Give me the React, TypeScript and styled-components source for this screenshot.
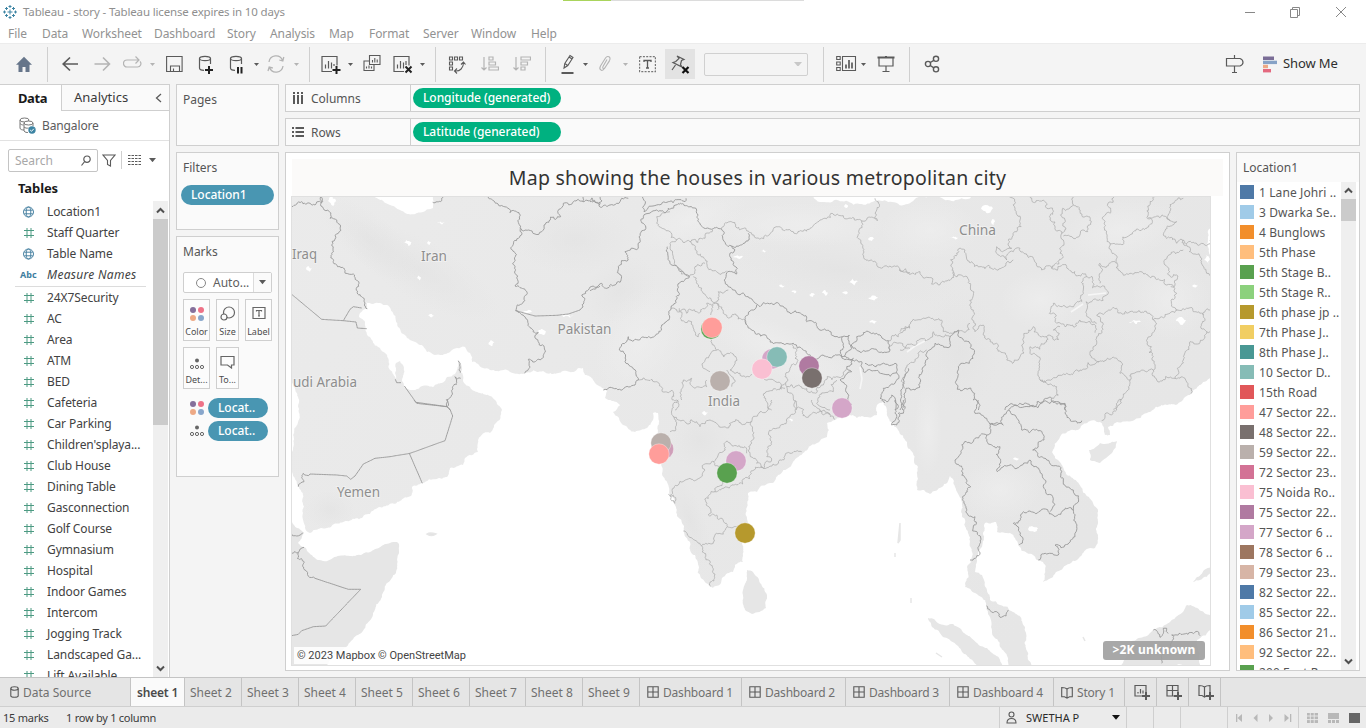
import React from "react";
import styled, { createGlobalStyle } from "styled-components";

const ui = `"Noto Sans", "Open Sans", sans-serif`;

const Global = createGlobalStyle`
  * { box-sizing: border-box; }
  html, body { margin: 0; padding: 0; }
  body { width: 1366px; height: 728px; overflow: hidden; background: #fff; font-family: ${ui}; font-size: 12px; color: #444; }
`;

/* ---------- frame ---------- */
const Window = styled.div`
  width: 1366px; height: 728px; display: flex; flex-direction: column; background: #f4f4f4; overflow: hidden;
`;
const TitleBar = styled.div`
  height: 23px; background: #fff; display: flex; align-items: center; padding-left: 3px; color: #8f8f8f; font-size: 11.5px; position: relative; flex: none;
`;
const TitleText = styled.span<{ $w: number }>`
  margin-left: 6px; width: ${p => p.$w}px; white-space: nowrap; letter-spacing: -0.15px;
`;
const TopAccent = styled.div`
  position: absolute; left: 563px; top: 0; width: 241px; height: 1px; background: linear-gradient(to right, #a9d45c 0 48px, #dcdcdc 48px);
`;
const WindowButtons = styled.div`
  margin-left: auto; margin-right: 19px; height: 20px; display: flex; gap: 34px; align-items: center;
`;
const MenuBar = styled.div`
  height: 20px; flex: none; background: #fff; color: #929292; font-size: 12px; display: flex; line-height: 21px; padding-left: 8px;
`;
const MenuItem = styled.span<{ $w: number }>`
  width: ${p => p.$w}px; white-space: nowrap; letter-spacing: -0.08px;
`;
const Toolbar = styled.div`
  height: 41px; flex: none; display: flex; align-items: center; border-top: 1px solid #ececec; background: #f4f4f4;
`;
const Tool = styled.div<{ $gap: number; $w: number; $on?: boolean }>`
  margin-left: ${p => p.$gap}px; width: ${p => p.$w}px; height: ${p => (p.$on ? 30 : 24)}px; flex: none;
  display: flex; align-items: center; justify-content: center; background: ${p => (p.$on ? "#e3e3e3" : "transparent")};
`;
const Divider = styled.div<{ $gap: number }>`
  margin-left: ${p => p.$gap}px; width: 1px; height: 35px; background: #cfcfcf; flex: none;
`;
const FitSelect = styled.div`
  margin-left: 9px; width: 104px; height: 23px; border: 1px solid #d0d0d0; border-radius: 2px; display: flex; align-items: center; justify-content: flex-end; padding-right: 5px; flex: none;
`;
const ShowMe = styled.span`
  margin-left: 6px; font-size: 13px; color: #2e2e2e; white-space: nowrap; letter-spacing: -0.1px; margin-top: -2px;
`;
const Body = styled.div`
  height: 593px; flex: none; display: flex;
`;

/* ---------- data pane ---------- */
const SidePane = styled.div`
  width: 170px; background: #fff; border-right: 1px solid #cfcfcf; border-top: 1px solid #cfcfcf; display: flex; flex-direction: column; flex: none;
`;
const PaneTabs = styled.div`
  display: flex; height: 26px; flex: none; font-size: 13px; line-height: 25px;
`;
const PaneTab = styled.div<{ $active?: boolean }>`
  width: ${p => (p.$active ? 62 : 107)}px; text-align: left; padding-left: ${p => (p.$active ? 18 : 12)}px;
  font-weight: ${p => (p.$active ? 700 : 400)}; color: ${p => (p.$active ? "#1a1a1a" : "#3a3a3a")};
  background: ${p => (p.$active ? "#fff" : "#fafafa")};
  border-right: ${p => (p.$active ? "1px solid #cfcfcf" : "0")};
  border-bottom: ${p => (p.$active ? "0" : "1px solid #cfcfcf")};
  display: flex; justify-content: space-between; align-items: center; padding-right: ${p => (p.$active ? 0 : 7)}px; white-space: nowrap; letter-spacing: ${p => (p.$active ? "-.4px" : "0")};
`;
const SourceRow = styled.div`
  height: 30px; flex: none; display: flex; align-items: center; padding-left: 19px; gap: 6px; border-bottom: 1px solid #e2e2e2; color: #5c5c5c; letter-spacing: -0.13px;
`;
const SearchRow = styled.div`
  height: 38px; flex: none; display: flex; align-items: center; padding-left: 8px;
`;
const SearchBox = styled.div`
  width: 90px; height: 23px; border: 1px solid #c4c4c4; border-radius: 2px; display: flex; align-items: center; justify-content: space-between; padding: 0 6px; color: #a8a8a8; margin-right: 4px;
`;
const ThinRule = styled.div`
  width: 1px; height: 18px; background: #cfcfcf; margin: 0 6px 0 5px;
`;
const TablesHead = styled.div`
  height: 22px; flex: none; font-weight: 700; font-size: 13px; color: #1a1a1a; padding-left: 18px; line-height: 19px; letter-spacing: -0.1px;
`;
const FieldArea = styled.div`
  flex: 1; min-height: 0; display: flex; overflow: hidden;
`;
const FieldList = styled.div`
  width: 153px; flex: none; overflow: hidden;
`;
const Field = styled.div<{ $italic?: boolean }>`
  height: 21px; display: flex; align-items: center; color: #424242; font-style: ${p => (p.$italic ? "italic" : "normal")}; letter-spacing: ${p => (p.$italic ? 0.3 : -0.1)}px; white-space: nowrap;
`;
const FieldIcon = styled.span`
  width: 47px; padding-left: 20px; display: flex; align-items: center; flex: none;
`;
const Abc = styled.span`
  font: 700 9px ${ui}; color: #3e7ea0; letter-spacing: 0;
`;
const FieldRule = styled.div`
  height: 1px; margin: 1px 7px 0 15px; background: #dcdcdc;
`;
const ScrollTrack = styled.div<{ $w: number }>`
  width: ${p => p.$w}px; background: #efefef; display: flex; flex-direction: column; align-items: center; flex: none;
`;
const ScrollArrow = styled.div<{ $h: number }>`
  height: ${p => p.$h}px; display: flex; align-items: center; justify-content: center; flex: none;
`;
const ScrollThumb = styled.div<{ $h: number }>`
  height: ${p => p.$h}px; width: 100%; background: #cbcbcb; flex: none;
`;
const Grow = styled.div`flex: 1;`;

/* ---------- cards ---------- */
const CardColumn = styled.div`
  width: 103px; margin-left: 6px; display: flex; flex-direction: column; gap: 6px; flex: none;
`;
const Card = styled.div<{ $h: number }>`
  height: ${p => p.$h}px; border: 1px solid #cfcfcf; background: #fafafa; display: flex; flex-direction: column; flex: none;
`;
const CardTitle = styled.div`
  padding: 6px 0 0 6px; line-height: 18px; color: #555; letter-spacing: 0;
`;
const Pill = styled.div<{ $w: number; $color: string; $ml?: number; $mt?: number }>`
  width: ${p => p.$w}px; height: 20px; margin: ${p => p.$mt ?? 0}px 0 0 ${p => p.$ml ?? 0}px; border-radius: 10px; background: ${p => p.$color}; color: #fff; font-weight: 500; padding-left: 10px; line-height: 19px; white-space: nowrap; letter-spacing: -0.05px; font-size: 12px; flex: none;
`;
const MarkType = styled.div`
  margin: 11px 0 0 6px; width: 89px; height: 21px; border: 1px solid #cfcfcf; border-radius: 2px; background: #fff; display: flex; align-items: center; color: #606060; padding-left: 11px; white-space: nowrap; flex: none;
`;
const MarkTypeText = styled.span`margin-left: 6px; width: 40px;`;
const MarkArrow = styled.span`
  border-left: 1px solid #dcdcdc; height: 19px; width: 18px; display: flex; align-items: center; justify-content: center; background: #fafafa;
`;
const ButtonRow = styled.div`
  display: flex; margin: 6px 0 0 6px; gap: 6px; flex: none;
`;
const MarkButton = styled.div<{ $w: number }>`
  width: ${p => p.$w}px; height: 42px; border: 1px solid #cfcfcf; background: #fcfcfc; display: flex; flex-direction: column; align-items: center; justify-content: space-between; padding: 6px 0 1px; font-size: 9px; line-height: 14px; color: #4c4c4c; white-space: nowrap;
`;
const EncodingRow = styled.div`
  display: flex; align-items: center; height: 20px; margin: 0 0 3px 12px; gap: 3px; flex: none;
`;
const EncodingGap = styled.div`height: 9px; flex: none;`;

/* ---------- shelves and sheet ---------- */
const Main = styled.div`
  margin-left: 6px; width: 1075px; display: flex; flex-direction: column; gap: 6px; flex: none;
`;
const Shelf = styled.div`
  height: 28px; border: 1px solid #cfcfcf; background: #fafafa; display: flex; align-items: center; color: #555; flex: none;
`;
const ShelfName = styled.div`
  width: 125px; height: 26px; display: flex; align-items: center; gap: 7px; padding-left: 6px; border-right: 1px solid #cfcfcf; margin-right: 2px;
`;
const SheetRow = styled.div`
  display: flex; gap: 6px; height: 519px;
`;
const Sheet = styled.div`
  width: 945px; border: 1px solid #cfcfcf; background: #fff; padding: 6px 5px 0; display: flex; flex-direction: column;
`;
const SheetTitle = styled.div`
  height: 37px; margin: 0 1px; background: #fbfaf9; text-align: center; font-size: 19.5px; line-height: 38px; color: #333; white-space: nowrap; letter-spacing: 0.26px;
`;
const MapFrame = styled.div`
  position: relative; width: 920px; height: 470px; border: 1px solid #e0e0e0; background: #fff; overflow: hidden;
`;
const Credit = styled.div`
  position: absolute; left: 2px; bottom: 1px; height: 17px; background: rgba(255,255,255,.85); padding: 0 3px; font: 11px/17px Roboto, sans-serif; color: #444; white-space: nowrap;
`;
const Unknown = styled.div`
  position: absolute; right: 5px; bottom: 5px; width: 102px; height: 19px; border-radius: 3px; background: rgba(158,158,158,.9); color: #fff; font: 700 12px/18px "Noto Sans", sans-serif; letter-spacing: 0.2px; text-align: center; white-space: nowrap;
`;
const Legend = styled.div`
  width: 124px; border: 1px solid #cfcfcf; background: #fafafa; display: flex; flex-direction: column;
`;
const LegendTitle = styled.div`
  height: 29px; line-height: 30px; padding-left: 6px; color: #555; flex: none;
`;
const LegendBody = styled.div`
  display: flex; height: 488px; background: #fff; overflow: hidden;
`;
const LegendItems = styled.div`width: 104px; flex: none; overflow: hidden;`;
const LegendItem = styled.div`
  height: 20px; display: flex; align-items: center; padding-left: 3px; gap: 5px; color: #555; white-space: nowrap; letter-spacing: 0.1px;
`;
const Swatch = styled.span<{ $c: string }>`
  width: 14px; height: 14px; background: ${p => p.$c}; flex: none;
`;

/* ---------- bottom ---------- */
const SheetTabs = styled.div`
  height: 30px; flex: none; background: #e5e5e5; border-top: 1px solid #c4c4c4; border-bottom: 1px solid #cfcfcf; display: flex; color: #707070;
`;
const SheetTab = styled.div<{ $w: number; $active?: boolean; $pad?: number }>`
  width: ${p => p.$w}px; border-right: 1px solid #c4c4c4; display: flex; align-items: center; gap: 4px; padding-left: ${p => p.$pad ?? 5}px; flex: none;
  background: ${p => (p.$active ? "#fafafa" : "transparent")}; font-weight: ${p => (p.$active ? 600 : 400)}; color: ${p => (p.$active ? "#4a4a4a" : "#707070")}; white-space: nowrap; letter-spacing: ${p => (p.$active ? -0.2 : -0.05)}px;
`;
const TabName = styled.span<{ $tight?: boolean }>`
  letter-spacing: ${p => (p.$tight ? -0.2 : 0)}px;
`;
const Status = styled.div`
  height: 21px; flex: none; background: #ebebeb; display: flex; align-items: center; font-size: 11px; color: #3a3a3a; white-space: nowrap;
`;
const StatusText = styled.span<{ $w: number; $ml: number }>`
  margin-left: ${p => p.$ml}px; width: ${p => p.$w}px; letter-spacing: -0.25px;
`;
const StatusCell = styled.div<{ $w: number }>`
  width: ${p => p.$w}px; height: 21px; border-left: 1px solid #cfcfcf; display: flex; align-items: center; padding: 0 6px; justify-content: space-between; flex: none;
`;
const UserName = styled.span`margin-left: 9px; flex: 1; letter-spacing: 0; color: #2a2a2a;`;

/* ---------- icons ---------- */
const G = "#5a5a5a";
const L = "#b4b4b4";
const Svg = ({ w, h = 24, children, c = G, sw = 1.2 }: { w: number; h?: number; children: React.ReactNode; c?: string; sw?: number }) => (
  <svg width={w} height={h} viewBox={`0 0 ${w} ${h}`} fill="none" stroke={c} strokeWidth={sw} style={{ display: "block", flex: "none" }}>{children}</svg>
);
const Caret = ({ c = G, s = 5 }: { c?: string; s?: number }) => (
  <svg width={s} height={s * 0.6} viewBox="0 0 10 6" style={{ display: "block" }}><path d="M0 0h10L5 6z" fill={c} /></svg>
);
const HashIcon = () => <svg width="17" height="12" viewBox="0 0 17 12" fill="none" stroke="#4c9a82" strokeWidth="1"><path d="M7 1v10M11 1v10M4 3.5h10M4 8.500h10" /></svg>;
const GlobeIcon = () => (
  <svg width="17" height="12" viewBox="0 0 17 12" fill="none" stroke="#4a83a3" strokeWidth="1"><circle cx="8.500" cy="6" r="5" /><ellipse cx="8.500" cy="6" rx="2.300" ry="5" /><path d="M4.200 4.200h8.600M4.200 7.800h8.600" /></svg>
);
const ColorDots = () => (
  <svg width="16" height="16" viewBox="0 0 16 16"><circle cx="4" cy="4" r="3" fill="#85709b" /><circle cx="12" cy="4" r="3" fill="#ee7287" /><circle cx="4" cy="12" r="3" fill="#eda985" /><circle cx="12" cy="12" r="3" fill="#88a6cb" /></svg>
);
const DetailDots = () => (
  <svg width="16" height="12" viewBox="0 0 16 12" fill="none" stroke="#666"><circle cx="8" cy="2.500" r="2" fill="#666" stroke="none" /><circle cx="3" cy="9" r="1.600" /><circle cx="8" cy="9" r="1.600" /><circle cx="13" cy="9" r="1.600" /></svg>
);
const Chevron = ({ up }: { up?: boolean }) => <Svg w={9} h={7} c="#505050" sw={2}><path d={up ? "M1 5.500l3.500-3.500L8 5.500" : "M1 1.500L4.500 5 8 1.500"} /></Svg>;
const GridIcon = () => <Svg w={12} h={12} sw={1.1}><path d="M.8.8h10.400v10.400H.800zM6 .8v10.400M.8 6h10.400" /></Svg>;
const BookIcon = () => <Svg w={12} h={13} sw={1.1}><path d="M6 2.500v9.700M.7 1.500c2 0 4 .2 5.300 1.500 1.300-1.300 3.300-1.500 5.300-1.500v9.300H8.500L6 12.200l-2.500-1.400H.7z" /></Svg>;
const Cylinder = () => <><ellipse cx="7" cy="6.500" rx="5.500" ry="2.200" /><path d="M1.500 6.500v9.500c0 1 1.500 2.300 4.500 2.300M12.500 6.500v5.500" /></>;

const ToolStrip = () => {
  const caret = (gap: number, c = G) => <Tool $gap={gap} $w={5}><Caret c={c} /></Tool>;
  return (
    <Toolbar>
      <Tool $gap={15} $w={18}><Svg w={18} c="none"><path d="M9 4.800L1 12.800h2.500v7.200h4v-5h3v5h4v-7.200H17z" fill="#66758a" /></Svg></Tool>
      <Divider $gap={14} />
      <Tool $gap={14} $w={17}><Svg w={17} sw={1.700}><path d="M16 12H1.200M8 5.500L1.200 12 8 18.500" /></Svg></Tool>
      <Tool $gap={15} $w={17}><Svg w={17} c={L} sw={1.6}><path d="M.5 12h15M9 5.500l6.500 6.500L9 18.500" /></Svg></Tool>
      <Tool $gap={12} $w={19}><Svg w={19} c={L} sw={1.2}><path d="M8 15H4a3.500 3.500 0 0 1 0-7h12M12.500 4.500L16 8l-3.500 3.500M17 9.500c2 2 .5 5.500-2.500 5.500H8" /></Svg></Tool>
      {caret(8, L)}
      <Tool $gap={11} $w={17}><Svg w={17} sw={1.1}><path d="M.6 4.500h15.500v15H.6zM4.500 19.500V14h9v5.500M7.500 19.500v-3" /></Svg></Tool>
      <Tool $gap={15} $w={17}><Svg w={17}><Cylinder /><path d="M11 14v8M7 18h8" stroke="#222" strokeWidth="2" /></Svg></Tool>
      <Tool $gap={14} $w={17}><Svg w={17}><Cylinder /><path d="M9 15v6.500M12.500 15v6.500" stroke="#222" strokeWidth="2" /></Svg></Tool>
      {caret(8)}
      <Tool $gap={8} $w={18}><Svg w={18} c={L} sw={1.3}><path d="M2 10a7 7 0 0 1 13.500-1.500M16 14a7 7 0 0 1-13.500 1.500M16.800 5l-1 4-3.500-1M1 19l1.200-4 3.600 1" /></Svg></Tool>
      {caret(9, L)}
      <Divider $gap={10} />
      <Tool $gap={11} $w={20}><Svg w={20}><path d="M11 19.500H1v-15h15v9M4.500 16.500v-4M7.500 16.500V9M10.500 16.500v-6M13 14V12" /><path d="M15.500 14v8M11.500 18h8" stroke="#222" strokeWidth="2" /></Svg></Tool>
      {caret(7)}
      <Tool $gap={10} $w={18}><Svg w={18} sw={1.100}><path d="M6.500 3.500h10.500v9H6.500zM6.500 9H1v9.500h10v-6M9.500 10.500V8M11.800 10.500V6M14.200 10.500V7.500M3.500 16.500v-2M6 16.500v-3M8.500 16.500v-2" /></Svg></Tool>
      <Tool $gap={12} $w={20}><Svg w={20}><path d="M11 19.500H1v-15h15v9M4.500 16.500v-4M7.500 16.500V9M10.500 16.500v-6M13 13V9" /><path d="M12.500 14.500l6 6M18.500 14.500l-6 6" stroke="#222" strokeWidth="2" /></Svg></Tool>
      {caret(7)}
      <Divider $gap={10} />
      <Tool $gap={12} $w={18}><Svg w={18} sw={1.100}><path d="M1.500 5h3v3h-3zM6.500 5h3v3h-3zM11.500 5h3v3h-3zM1.500 10h3v3h-3zM1.500 15h3v3h-3zM7 19c5 .5 8.500-3 8.500-8.500M13 12.500l2.500-2.500 2 2.500M9 16.500L6.500 19 9 21.500" /></Svg></Tool>
      <Tool $gap={15} $w={18}><Svg w={18} c={L} sw={1.200}><path d="M3 5v13M.5 15.500L3 18l2.500-2.500M8 5h4v3H8zM8 10h6.500v3H8zM8 15h9.500v3H8z" /></Svg></Tool>
      <Tool $gap={14} $w={18}><Svg w={18} c={L} sw={1.200}><path d="M3 5v13M.5 15.500L3 18l2.500-2.500M8 5h9.500v3H8zM8 10h6.500v3H8zM8 15h4v3H8z" /></Svg></Tool>
      <Divider $gap={14} />
      <Tool $gap={15} $w={14}><Svg w={14} sw={1.1}><path d="M3 16l.8-4.500L9 3.500l3 2-5.200 8zM3.800 11.500l3 2M8 5l3 2" /><path d="M.5 21h12" strokeWidth="2" /></Svg></Tool>
      {caret(8)}
      <Tool $gap={10} $w={14}><Svg w={14} c={L} sw={1.1}><path d="M9 7.500l-4 7c-1 2 1 3 2 1.300L11.500 8.500c2-3.500-2-5.500-4-2.500L2.500 14c-2 3.500 1.500 6 3.500 3l5.500-8" /></Svg></Tool>
      {caret(11, L)}
      <Tool $gap={11} $w={17}><Svg w={17}><path d="M.6 4.600h15.800v15H.6z" strokeDasharray="2 1.300" stroke="#777" /><path d="M5 10V8.500h7V10M8.500 8.500v7.500M7 16h3" strokeWidth="1.300" /></Svg></Tool>
      <Tool $gap={9} $w={30} $on><Svg w={20}><path d="M7 4l7 3.500-2.500 1-1 4 1.500 2.500-9-4.500 2.800-1L9 6.500zM5.500 13L2 18" /><path d="M12.500 15l6 6M18.500 15l-6 6" stroke="#111" strokeWidth="2.200" /></Svg></Tool>
      <FitSelect><Caret c="#c8c8c8" s={8} /></FitSelect>
      <Divider $gap={15} />
      <Tool $gap={12} $w={21}><Svg w={21} sw={1.100}><path d="M.7 4.500h3.500v3H.7zM.7 10h3.500v3H.7zM.7 15.500h3.500v3H.7zM6.500 4.500h13v14h-13z" /><path d="M10 16.500v-4M13 16.500V8M16 16.500v-6" strokeWidth="1.700" /></Svg></Tool>
      {caret(4)}
      <Tool $gap={11} $w={18}><Svg w={18}><path d="M.5 5.500h17M9 4v2" strokeWidth="2" /><path d="M2 6v8h14V6M9 14v5M5.500 19.500h7" /></Svg></Tool>
      <Divider $gap={14} />
      <Tool $gap={14} $w={17}><Svg w={17} sw={1.400}><circle cx="4" cy="12" r="2.600" /><circle cx="12" cy="6.800" r="2.600" /><circle cx="12" cy="17.300" r="2.600" /><path d="M6.300 10.500l3.500-2.200M6.300 13.500l3.500 2.300" /></Svg></Tool>
      <Tool $gap={284} $w={20}><Svg w={20}><path d="M1.500 6.500h13.500c4 1.500 4 6 0 7.500H1.500zM9.500 3v3.500M9.500 14v6.500M7 20.500h5" /></Svg></Tool>
      <Tool $gap={17} $w={15}><Svg w={15} c="none"><path d="M1 4.500h11V8H1z" fill="#7a6d96" /><path d="M1 8.700h14v3.400H1z" fill="#86a2c6" /><path d="M1 12.800h5v3.400H1z" fill="#eda985" /><path d="M1 17h8v3.400H1z" fill="#e4697f" /></Svg></Tool>
      <ShowMe>Show Me</ShowMe>
    </Toolbar>
  );
};

/* ---------- map ---------- */
type Tile = { x: number; y: number; lines: string[] };
const parse = (s: string, ox: number, oy: number): number[][] =>
  s.trim().split(/\s+/).map(p => { const [a, b] = p.split(",").map(Number); return [ox + a / 3, oy + b / 3]; });

// Midpoint displacement gives borders and coasts their ragged detail.
const rough = (pts: number[][], amp: number): string => {
  const noise = (x: number, y: number) => { const v = Math.sin(x * 12.9898 + y * 78.233) * 43758.5453; return (v - Math.floor(v)) * 2 - 1; };
  const out: number[][] = [pts[0]];
  const split = (a: number[], b: number[]) => {
    const dx = b[0] - a[0], dy = b[1] - a[1], len = Math.hypot(dx, dy);
    if (len < 2.2) { out.push(b); return; }
    const k = noise(a[0] + b[0], a[1] + b[1]) * amp;
    const m = [(a[0] + b[0]) / 2 - dy * k, (a[1] + b[1]) / 2 + dx * k];
    split(a, m); split(m, b);
  };
  for (let i = 1; i < pts.length; i++) split(pts[i - 1], pts[i]);
  return "M" + out.map(p => `${p[0].toFixed(1)} ${p[1].toFixed(1)}`).join("L");
};

const page = (s: string) => s.trim().split(/\s+/).map(p => p.split(",").map(Number));

const mainland = page(`285,190 285,472 292,472 299,487 303,513 305,528 310,533 327,528 347,521 370,514 380,507 400,501 411,496 412,487 422,483 437,479 447,477 450,468 463,465 465,458 478,452 478,440 484,433 490,433 495,424 502,410 495,400 490,396 480,393 470,387 463,380 461,372 460,361 458,363 455,374 447,377 442,383 433,387 420,387 412,390 404,387 402,381 403,377 404,368 400,361 396,363 395,373 396,379 390,370 385,353 378,347 370,337 365,323 359,317 363,310 367,308 366,302 373,304 387,305 393,313 398,327 407,338 417,343 427,352 440,355 450,352 457,348 465,347 470,353 472,362 483,368 497,371 510,372 525,373 543,371 563,371 583,368 585,375 593,380 602,388 607,391 605,398 612,401 620,405 613,412 623,425 635,432 647,428 653,420 653,413 658,413 658,430 661,450 662,467 665,480 670,495 676,507 682,523 690,542 697,560 705,582 713,588 721,583 723,577 733,572 735,565 743,562 743,553 742,543 748,523 747,507 748,493 757,492 760,487 772,483 778,475 790,467 803,453 817,443 827,437 827,423 835,420 853,415 857,418 877,415 878,404 883,402 887,413 892,423 898,430 907,442 913,453 918,467 917,490 930,494 942,487 950,476 955,487 962,503 965,520 970,537 972,557 967,567 965,587 975,593 986,605 990,617 992,633 1000,647 1010,670 1037,670 1026,648 1025,627 1013,612 1000,605 990,600 987,590 982,575 975,572 977,557 982,547 983,533 985,523 996,522 997,532 1010,533 1018,545 1027,553 1037,560 1043,562 1043,582 1053,577 1063,568 1077,560 1095,548 1097,527 1093,503 1082,488 1067,475 1055,458 1052,452 1060,437 1067,432 1082,425 1100,422 1103,426 1105,435 1110,435 1108,427 1117,422 1147,413 1167,405 1183,400 1190,395 1203,382 1216,376 1216,190 285,190`);
const islands = [
  page("747,570 753,572 760,583 767,595 766,608 752,614 745,610 743,590 747,570"),
  page("928,618 953,624 967,635 987,648 1007,668 980,668 963,653 943,637 932,627 928,618"),
  page("1089,450 1100,443 1117,441 1112,453 1100,463 1090,460 1089,450"),
  page("1118,668 1130,643 1153,630 1170,622 1187,605 1212,617 1212,627 1197,640 1200,668 1118,668"),
  page("1212,566 1193,582 1200,580 1212,571 1212,566"),
  page("285,515 292,522 297,528 304,533 298,543 304,547 308,552 315,558 323,561 350,556 370,552 390,543 397,542 399,544 398,555 396,573 382,597 373,613 358,635 345,648 330,660 325,668 285,668 285,515"),
];

const coarse: Tile[] = [
  { x: 290, y: 150, lines: [
    "5,433 95,508 160,512 198,516 202,534 230,536", "160,512 180,478 190,470 215,474", "316,688 320,698 333,698", "343,708 378,757 472,770 480,780", "677,482 735,498 800,496 835,492 870,480"] },
  { x: 290, y: 400, lines: [
    "60,222 140,225 170,228 182,238 195,228 220,192 255,175 300,170 360,160 465,122 488,48 480,28 470,20 380,10 372,0", "358,160 397,250", "75,535 175,568 212,568 107,678 70,680 35,692 25,703 5,707"] },
];
const national: Tile[] = [
  { x: 290, y: 150, lines: [
    "5,170 35,155 60,160 75,165 98,155 92,140", "92,140 100,175 120,205 152,228 145,250 125,285 125,310 150,350 190,372 207,400 203,432 215,440 222,465 232,476",
    "472,770 485,735 488,710 500,690 495,680 512,685", "505,632 510,650 511,668", "428,157 455,152 460,140", "582,141 605,148 630,168 660,188 687,188 691,235",
    "691,235 715,240 735,252 755,245 762,225 812,200 820,160 850,155 880,155 930,158", "880,140 880,155",
    "691,235 685,265 665,290 668,340 675,370 675,408 705,418 712,430 677,482", "870,480 875,435 895,420 930,408", "677,482 720,533 745,547 748,585 763,592 762,610 715,628 704,670"] },
  { x: 590, y: 150, lines: [
    "0,422 20,412 35,400 75,405 85,350 115,330 105,305 145,295 150,270 165,240 152,210 160,200 200,180 250,175 295,170",
    "0,155 25,160 35,172 60,165 80,160 95,145 115,145", "30,140 28,165", "157,140 162,185 200,165 235,155 285,155 288,145",
    "295,170 320,190 325,215 365,238 395,238 398,265 425,288 455,285 475,250", "425,288 435,300 420,320 442,355 440,372 410,368 415,410 440,430 475,440 500,462 510,470 520,458",
    "298,380 272,395 268,430 243,475 215,525 175,560 145,570 115,560 110,575 88,600 105,635 138,665 145,690 135,705 60,712 40,720",
    "232,290 240,340 270,365 298,380",
    "500,465 485,480 470,525 530,560 560,578 610,580 640,600 700,615 755,620 752,600 760,580 757,560", "520,458 545,460 600,490 650,515 690,540 735,560 757,560 778,555 783,590 762,620",
    "783,590 800,560 820,548 860,550 895,572 900,600 830,603 800,600 783,585", "755,620 790,625 770,650 785,665 750,690 770,710 775,740 785,765",
    "755,620 785,630 815,635 820,665 880,672 920,668 915,640 825,640", "920,668 915,700 880,715 870,745 890,755 905,735 915,780", "955,655 940,690 935,740 930,780"] },
  { x: 900, y: 150, lines: [
    "150,590 155,555 175,540 190,570 207,575 208,640 170,690 172,718 212,714 220,750 235,755 235,780", "150,590 105,580 80,610 75,640 65,670 45,720 18,715 15,750 8,780",
    "315,780 345,765 400,770 430,755 455,745 495,760 495,780"] },
  { x: 900, y: 400, lines: [
    "235,0 225,40 260,55 300,70 310,75 320,35 345,15 390,20 430,5 470,5 495,15 500,45 545,62",
    "300,70 260,105 225,115 215,130 185,135 165,180 185,225 212,260 192,305 225,350 240,430 210,480",
    "260,105 275,135 300,140 302,185 292,215 330,195 355,203 390,180 410,200 427,225 430,260 458,290 450,335",
    "325,30 355,60 365,90 410,88 432,120 410,145 398,150 440,180 490,240 520,270 530,310 520,330 490,330 470,348 445,335 370,335 340,370 358,435",
    "520,330 528,370 525,410 465,435 475,465 440,462 415,480", "260,617 290,635 300,652 325,630", "760,690 780,712 790,685 800,685 805,700", "785,790 790,760 815,750 815,705 840,700 900,707"] },
  { x: 590, y: 400, lines: ["875,0 885,8", "915,0 915,40 905,75 920,75 925,40 940,40 940,0"] },
  { x: 290, y: 400, lines: ["25,260 42,245 40,220 60,222", "472,0 470,20", "5,402 20,408 38,398", "5,460 25,458 42,442", "25,458 22,475 45,510 75,535"] },
];
const regional: Tile[] = [
  { x: 590, y: 150, lines: [
    "395,238 435,218 475,243 545,245 565,230 610,245 660,235 690,210 760,197 815,213 862,212 855,190 868,170 855,145", "815,213 808,250 820,310 860,345 900,348 960,368",
    "240,185 200,200 200,220 240,245 260,270 300,275 345,265 368,240", "260,270 240,280 250,320 262,350 298,380", "300,275 320,310 350,340 410,362", "298,380 315,350 345,340",
    "310,380 325,410 350,440 370,458 385,425 415,420", "243,475 285,478 290,490 320,485 350,460 380,460 382,480", "380,460 400,490 470,525", "268,475 275,500 305,515 315,545 325,560 330,550",
    "370,465 362,495", "365,570 380,600 430,612 430,650 420,660 450,670 485,672", "380,600 345,630 340,655 360,665", "610,580 615,625 600,655 585,680 590,710 640,715 700,705 740,680 770,655",
    "590,710 610,745 620,780", "585,700 560,720 525,730 530,755 545,780", "520,685 550,690 570,715 585,715", "145,690 200,695 245,720 265,755 255,780", "275,750 280,690 305,685 315,715 350,710 350,690",
    "740,690 730,725 690,740 680,760 720,780", "410,660 425,680 425,710", "895,572 925,560 945,530 960,530", "900,600 960,595"] },
  { x: 900, y: 150, lines: [
    "328,140 345,175 360,210 350,245 325,280 335,295 290,290 290,310 320,330 340,305", "340,305 360,295 400,325 425,360 455,355 490,320 490,270 485,250",
    "340,330 290,360 240,350 215,335 195,300 175,297 162,320 160,365 145,390 115,405 60,365 0,358", "160,365 190,380 212,420 220,480 225,545",
    "390,140 430,150 450,210 485,250 495,210 488,175 520,165 520,140", "520,165 540,185 565,200 563,245 530,262 490,258",
    "642,140 630,190 628,278 650,325 690,370 745,378 800,405 830,430 832,480 760,510 745,490 690,485 650,475 590,495 590,560 580,590 597,635 650,625 660,670 690,690 670,740 640,778",
    "628,278 690,255 740,235 745,190 765,140", "745,203 810,212 812,180 850,145", "810,212 830,215 790,255 830,280 850,270 900,283 930,270", "850,270 865,290 905,325 920,370 930,405",
    "850,300 820,305 795,345 830,375 825,405 812,410", "455,355 510,362 560,380 615,415 620,435 590,450 558,455 560,480 590,520", "560,380 550,420 515,470 460,460 448,490 470,520 495,530 540,510 570,515 585,548",
    "650,340 600,340 605,365 600,400", "832,480 880,485 910,495 930,480", "910,495 920,545 930,545", "920,545 870,575 850,630 825,685 855,685 872,730", "760,510 750,560 760,620 760,660 720,665 690,690",
    "760,660 770,690 825,685", "225,545 250,525 290,580 320,630 355,630 365,585 400,530 415,555 440,560 440,575 390,590 390,610 415,620 420,690 500,670 540,660 597,635", "440,560 475,570 460,540 480,530",
    "420,690 470,710 475,735 455,745", "0,600 40,585 100,545 150,560", "80,600 30,640 5,690 15,715", "0,545 50,510 100,508 125,520 130,545 190,545 210,520"] },
  { x: 590, y: 400, lines: [
    "265,0 250,50 265,60 320,65 330,80 360,60 430,65 485,65 510,35 545,0", "250,50 240,95", "485,65 490,110 480,160 500,190 520,205 545,180 545,125 550,85 590,65 600,50 620,25 615,0", "620,25 680,40 735,58", "665,0 720,45",
    "520,205 560,195 600,160 635,155", "520,205 480,235 430,255 375,275 372,185 400,155 405,128 430,138 465,140 470,160", "372,185 340,215 300,235 265,255 255,310 250,285 235,283",
    "375,275 358,285 355,345 380,345 412,380 375,405 370,430 335,437 280,393", "335,437 355,480 370,510 362,558", "412,380 440,380"] },
  { x: 900, y: 400, lines: ["665,0 650,30 605,62"] },
];
const lakes: [number, number, number, number][] = [
  [332, 201, 4, 5], [441, 223, 4, 1.5], [407, 243, 4.5, 3], [429, 243, 2, 2], [419, 278, 2, 2.5], [309, 269, 3, 3], [491.500, 343, 3, 3], [568, 316, 7, 2], [542, 332, 4, 3], [430, 316, 4, 1.5],
  [526, 312, 6, 1], [858, 199, 6, 2], [846, 206, 2, 2], [871, 239, 3, 2], [853, 282, 5, 3.500], [845, 293, 3, 1.5], [873, 298, 5, 2.500], [812, 295, 3, 2], [825, 293, 3, 3], [794, 292, 2.500, 1.500], [782, 286, 3, 1.500],
  [764, 251, 3, 1.500], [873, 322, 4, 2], [738, 257, 5, 2], [987, 209, 6, 4], [993, 222, 2, 3], [954, 238, 4, 1.500], [1195, 286, 3, 1.500], [1181, 321, 5, 4], [1135, 322, 6, 2], [1207, 260, 3, 5], [1016, 459, 3, 1.500], [1033, 529, 5, 3], [705, 413, 3, 2], [791, 420, 2, 1.500],
];
const pins: [number, number, string][] = [
  [711, 329, "#59a14f"], [712, 327.500, "#ff9d9a"], [772, 359, "#d4a6c8"], [777, 357, "#86bcb6"], [762, 369, "#fabfd2"], [809, 366, "#b07aa1"], [812, 378, "#79706e"], [720, 381, "#bab0ac"],
  [842, 408, "#d4a6c8"], [663.500, 449, "#cf9fb9"], [661, 443, "#bab0ac"], [659, 454, "#ff9d9a"], [736, 461, "#d4a6c8"], [727, 473, "#59a14f"], [745, 533, "#b6992d"],
];
const labels: [string, number, number, number][] = [
  ["Iraq", 292, 259, 25], ["Iran", 421, 261, 26], ["Pakistan", 557.500, 334, 54], ["India", 708, 406, 32], ["China", 959, 235, 37], ["udi Arabia", 293, 387, 64], ["Yemen", 337, 497, 43],
];
// Soft relief: lighter basins and darker ranges.
const relief: [number, number, number, number, string, number][] = [
  [420, 270, 90, 30, "d", 30], [370, 240, 60, 25, "d", 40], [575, 240, 60, 35, "d", 0], [690, 220, 60, 25, "w", -20], [800, 225, 90, 22, "w", 0], [640, 340, 40, 60, "w", 30], [780, 350, 90, 25, "w", 25],
  [1040, 300, 40, 30, "w", 0], [1120, 230, 60, 30, "w", -10], [1090, 360, 60, 40, "d", 0], [960, 350, 40, 60, "d", 0], [928, 430, 14, 45, "w", 0], [1000, 490, 40, 30, "w", 0], [840, 270, 120, 30, "d", 10],
  [1170, 300, 40, 40, "w", 0], [690, 520, 15, 50, "d", -20], [700, 440, 30, 30, "d", 0], [330, 510, 25, 20, "d", 0], [350, 570, 40, 16, "w", -10], [620, 290, 40, 30, "d", -40], [930, 230, 50, 30, "w", 0],
];

const draw = (tiles: Tile[], amp: number) => tiles.flatMap(t => t.lines.map(l => rough(parse(l, t.x, t.y), amp))).join("");

const MapView = () => (
  <svg width="918" height="468" viewBox="292 197 918 468" style={{ display: "block" }}>
    <defs>
      <linearGradient id="land" x1="0" x2="1" y1="0" y2=".4"><stop offset="0" stopColor="#ebebeb" /><stop offset="1" stopColor="#e6e6e6" /></linearGradient>
      <radialGradient id="w"><stop offset="0" stopColor="#f0f0f0" stopOpacity=".6" /><stop offset="1" stopColor="#f0f0f0" stopOpacity="0" /></radialGradient>
      <radialGradient id="d"><stop offset="0" stopColor="#e0e0e0" stopOpacity=".5" /><stop offset="1" stopColor="#e2e2e2" stopOpacity="0" /></radialGradient>
      <clipPath id="shore"><path d={rough(mainland, 0.16) + "Z"} /></clipPath>
    </defs>
    <path d={rough(mainland, 0.16) + "Z"} fill="url(#land)" />
    <g clipPath="url(#shore)">
      {relief.map(([x, y, rx, ry, k, a], i) => <ellipse key={i} cx={x} cy={y} rx={rx} ry={ry} fill={`url(#${k})`} transform={`rotate(${a} ${x} ${y})`} />)}
    </g>
    {islands.map((p, i) => <path key={i} d={rough(p, 0.12) + "Z"} fill="#e6e6e6" />)}
    <path d="M436 534q-6-2-9 0 5 3 9 0zM900 523l-2 20 2-3zM895 553v4M911 598v5M1083 637l2 4M936 653l6 4" fill="#e2e2e2" stroke="#e6e6e6" strokeWidth="1.500" />
    <path d={rough(page("373,196 390,205 405,213 423,212 433,208 433,196"), 0.1)} fill="#fff" />
    {lakes.map(([x, y, rx, ry], i) => (
      <path key={i} d={rough([[x - rx, y], [x - rx * 0.2, y - ry], [x + rx, y - ry * 0.2], [x + rx * 0.3, y + ry], [x - rx, y]], 0.25) + "Z"} fill="#fff" />
    ))}
    <path d="M907 352l8-6 12-6M860 367l2 12-2 10M1071 312l12-8M1088 295l18-2" stroke="#f6f6f6" strokeWidth="1.600" fill="none" />
    <path d={draw(regional, 0.34)} fill="none" stroke="#a8a8a8" strokeWidth=".7" />
    <path d={draw(national, 0.28)} fill="none" stroke="#979797" strokeWidth=".9" />
    <path d={draw(coarse, 0)} fill="none" stroke="#979797" strokeWidth=".9" />
    <g fontFamily="'Noto Sans', sans-serif" fontSize="13.500" fill="#8e8e8e" stroke="#f0f0f0" strokeWidth="2" paintOrder="stroke">
      {labels.map(([t, x, y, w]) => <text key={t} x={x} y={y} textLength={w} lengthAdjust="spacingAndGlyphs">{t}</text>)}
    </g>
    {pins.map(([x, y, c], i) => <circle key={i} cx={x} cy={y} r="10.200" fill={c} stroke="#fff" strokeOpacity=".5" strokeWidth=".7" />)}
  </svg>
);

/* ---------- data ---------- */
const measures = ["24X7Security", "AC", "Area", "ATM", "BED", "Cafeteria", "Car Parking", "Children'splaya...", "Club House", "Dining Table", "Gasconnection", "Golf Course", "Gymnasium", "Hospital", "Indoor Games", "Intercom", "Jogging Track", "Landscaped Ga...", "Lift Available"];
const menus: [string, number][] = [["File", 34], ["Data", 40], ["Worksheet", 72], ["Dashboard", 73], ["Story", 43], ["Analysis", 59], ["Map", 40], ["Format", 54], ["Server", 48], ["Window", 60], ["Help", 40]];
const legend: [string, string][] = [
  ["1 Lane Johri ..", "#4e79a7"], ["3 Dwarka Se..", "#a0cbe8"], ["4 Bunglows", "#f28e2b"], ["5th Phase", "#ffbe7d"], ["5th Stage B..", "#59a14f"], ["5th Stage R..", "#8cd17d"], ["6th phase jp ..", "#b6992d"], ["7th Phase J..", "#f1ce63"],
  ["8th Phase J..", "#499894"], ["10 Sector D..", "#86bcb6"], ["15th Road", "#e15759"], ["47 Sector 22..", "#ff9d9a"], ["48 Sector 22..", "#79706e"], ["59 Sector 22..", "#bab0ac"], ["72 Sector 23..", "#d37295"], ["75 Noida Ro..", "#fabfd2"],
  ["75 Sector 22..", "#b07aa1"], ["77 Sector 6 ..", "#d4a6c8"], ["78 Sector 6 ..", "#9d7660"], ["79 Sector 23..", "#d7b5a6"], ["82 Sector 22..", "#4e79a7"], ["85 Sector 22..", "#a0cbe8"], ["86 Sector 21..", "#f28e2b"], ["92 Sector 22..", "#ffbe7d"], ["200 Feet R..", "#59a14f"],
];
const sheets: [string, number][] = [["Sheet 2", 57], ["Sheet 3", 57], ["Sheet 4", 57], ["Sheet 5", 57], ["Sheet 6", 57], ["Sheet 7", 56], ["Sheet 8", 57], ["Sheet 9", 57]];
const dashboards: [string, number][] = [["Dashboard 1", 102], ["Dashboard 2", 104], ["Dashboard 3", 104], ["Dashboard 4", 104]];

export default function App() {
  return (
    <Window>
      <Global />
      <TitleBar>
        <TopAccent />
        <Svg w={14} h={14} c="#3d84a3" sw={1}><path d="M7 4.500v5M4.500 7h5M7 0v3M5.500 1.500h3M7 11v3M5.500 12.500h3M1.500 5.500v3M0 7h3M12.500 5.500v3M11 7h3M3.500 2v3M2 3.500h3M10.500 2v3M9 3.500h3M3.500 9v3M2 10.500h3M10.500 9v3M9 10.500h3" /></Svg>
        <TitleText $w={300}>Tableau - story - Tableau license expires in 10 days</TitleText>
        <WindowButtons>
          <Svg w={12} h={12} c="#888" sw={1}><path d="M2 6.500h10" /></Svg>
          <Svg w={12} h={12} c="#888" sw={1}><path d="M1.500 3.500h7v8h-7zM3.500 3.500v-2h7v8h-2" /></Svg>
          <Svg w={12} h={12} c="#888" sw={1}><path d="M1 1l10 10M11 1L1 11" /></Svg>
        </WindowButtons>
      </TitleBar>
      <MenuBar>{menus.map(([t, w]) => <MenuItem key={t} $w={w}>{t}</MenuItem>)}</MenuBar>
      <ToolStrip />
      <Body>
        <SidePane>
          <PaneTabs>
            <PaneTab $active>Data</PaneTab>
            <PaneTab>Analytics<Svg w={7} h={10} sw={1.300}><path d="M6 1L1.500 5 6 9" /></Svg></PaneTab>
          </PaneTabs>
          <SourceRow>
            <Svg w={17} h={17} c="#777" sw={1}><ellipse cx="5.500" cy="3" rx="4.500" ry="2" /><path d="M1 3v8c0 1.500 2 2 4 2M1 6.500c1 1 2 1.500 3.500 1.500" /><ellipse cx="9.500" cy="6" rx="4.500" ry="2" fill="#fff" /><path d="M5 6v8c1 1.500 3 1.500 4 1.500M14 6v3M5 10c1 1 3 1.500 4.500 1" /><circle cx="13" cy="13" r="3.700" fill="#3d84a3" stroke="none" /><path d="M11.200 13l1.300 1.300 2.300-2.500" stroke="#fff" /></Svg>
            Bangalore
          </SourceRow>
          <SearchRow>
            <SearchBox>Search<Svg w={10} h={11} sw={1.200}><circle cx="6" cy="4.200" r="3.200" /><path d="M3.700 6.500L.5 10.500" /></Svg></SearchBox>
            <Svg w={14} h={13} sw={1.100}><path d="M1 1h12L8.500 6.500v5.500l-3-1.500V6.500z" /></Svg>
            <ThinRule />
            <Svg w={13} h={10} sw={1}><path d="M0 .5h13M0 3.500h13M0 6.500h13M0 9.500h13" strokeDasharray="2.500 1" /></Svg>
            <Grow /><Caret s={7} /><Tool $gap={0} $w={13} />
          </SearchRow>
          <TablesHead>Tables</TablesHead>
          <FieldArea>
            <FieldList>
              <Field><FieldIcon><GlobeIcon /></FieldIcon>Location1</Field>
              <Field><FieldIcon><HashIcon /></FieldIcon>Staff Quarter</Field>
              <Field><FieldIcon><GlobeIcon /></FieldIcon>Table Name</Field>
              <Field $italic><FieldIcon><Abc>Abc</Abc></FieldIcon>Measure Names</Field>
              <FieldRule />
              {measures.map(m => <Field key={m}><FieldIcon><HashIcon /></FieldIcon>{m}</Field>)}
            </FieldList>
            <ScrollTrack $w={15}>
              <ScrollArrow $h={18}><Chevron up /></ScrollArrow>
              <ScrollThumb $h={206} />
              <Grow />
              <ScrollArrow $h={17}><Chevron /></ScrollArrow>
            </ScrollTrack>
          </FieldArea>
        </SidePane>
        <CardColumn>
          <Card $h={62}><CardTitle>Pages</CardTitle></Card>
          <Card $h={78}><CardTitle>Filters</CardTitle><Pill $w={93} $color="#4996b2" $ml={4} $mt={8}>Location1</Pill></Card>
          <Card $h={241}>
            <CardTitle>Marks</CardTitle>
            <MarkType>
              <Svg w={12} h={12} c="#888" sw={1}><circle cx="6" cy="6" r="4.500" /></Svg>
              <MarkTypeText>Auto...</MarkTypeText>
              <MarkArrow><Caret s={7} /></MarkArrow>
            </MarkType>
            <ButtonRow>
              <MarkButton $w={27}><ColorDots />Color</MarkButton>
              <MarkButton $w={23}><Svg w={16} h={15} c="#666"><circle cx="9" cy="6.500" r="5.500" /><circle cx="4" cy="11" r="3" fill="#fcfcfc" /></Svg>Size</MarkButton>
              <MarkButton $w={27}><Svg w={14} h={14} c="#666"><path d="M1 1.500h12v11H1zM4.500 5.500v-1h5v1M7 4.500v5.500M6 10h2" /></Svg>Label</MarkButton>
            </ButtonRow>
            <ButtonRow>
              <MarkButton $w={27}><Grow /><DetailDots /><Grow />Det...</MarkButton>
              <MarkButton $w={23}><Svg w={15} h={15} c="#666"><path d="M1 2.500h13v8.500h-2.500v3l-4-3H1z" /></Svg>To...</MarkButton>
            </ButtonRow>
            <EncodingGap />
            <EncodingRow><ColorDots /><Pill $w={60} $color="#4996b2">Locat..</Pill></EncodingRow>
            <EncodingRow><DetailDots /><Pill $w={60} $color="#4996b2">Locat..</Pill></EncodingRow>
          </Card>
        </CardColumn>
        <Main>
          <Shelf>
            <ShelfName><Svg w={12} h={12} sw={2}><path d="M2 0v2M6 0v2M10 0v2M2 3v9M6 3v9M10 3v9" /></Svg>Columns</ShelfName>
            <Pill $w={148} $color="#00b180">Longitude (generated)</Pill>
          </Shelf>
          <Shelf>
            <ShelfName><Svg w={12} h={12} sw={1.800}><path d="M0 2h2M0 6h2M0 10h2M3.500 2H12M3.500 6H12M3.500 10H12" /></Svg>Rows</ShelfName>
            <Pill $w={148} $color="#00b180">Latitude (generated)</Pill>
          </Shelf>
          <SheetRow>
            <Sheet>
              <SheetTitle>Map showing the houses in various metropolitan city</SheetTitle>
              <MapFrame>
                <MapView />
                <Credit>© 2023 Mapbox © OpenStreetMap</Credit>
                <Unknown>&gt;2K unknown</Unknown>
              </MapFrame>
            </Sheet>
            <Legend>
              <LegendTitle>Location1</LegendTitle>
              <LegendBody>
                <LegendItems>{legend.map(([t, c]) => <LegendItem key={t}><Swatch $c={c} />{t}</LegendItem>)}</LegendItems>
                <ScrollTrack $w={15}>
                  <ScrollArrow $h={17}><Chevron up /></ScrollArrow>
                  <ScrollThumb $h={22} />
                  <Grow />
                  <ScrollArrow $h={17}><Chevron /></ScrollArrow>
                </ScrollTrack>
              </LegendBody>
            </Legend>
          </SheetRow>
        </Main>
      </Body>
      <SheetTabs>
        <SheetTab $w={131} $pad={10}><Svg w={9} h={12} sw={1.100}><ellipse cx="4.500" cy="2.500" rx="3.700" ry="1.700" /><path d="M.8 2.500v7.300c0 2 7.400 2 7.400 0V2.500" /></Svg><TabName>Data Source</TabName></SheetTab>
        <SheetTab $w={54} $active $pad={6}>sheet 1</SheetTab>
        {sheets.map(([t, w]) => <SheetTab key={t} $w={w}><TabName>{t}</TabName></SheetTab>)}
        {dashboards.map(([t, w]) => <SheetTab key={t} $w={w} $pad={7}><GridIcon /><TabName $tight>{t}</TabName></SheetTab>)}
        <SheetTab $w={71} $pad={7}><BookIcon /><TabName $tight>Story 1</TabName></SheetTab>
        <SheetTab $w={32} $pad={9}><Svg w={16} h={16}><path d="M9 12H1V1.500h11V8M4 9.500V8M6.500 9.500V5M9 9.500V6.500" /><path d="M12 8v8M8 12h8" strokeWidth="2" /></Svg></SheetTab>
        <SheetTab $w={32} $pad={9}><Svg w={16} h={16}><path d="M9 12H1V1.500h11V8M6.500 1.500V12M1 6.500h11" /><path d="M12 8v8M8 12h8" strokeWidth="2" /></Svg></SheetTab>
        <SheetTab $w={32} $pad={9}><Svg w={16} h={16}><path d="M6.500 3v9.500M9 11.500L6.500 13 4 11.500H1V1.500c2 0 4 .3 5.500 1.500C8 1.800 10 1.500 12 1.500V8" /><path d="M12 8v8M8 12h8" strokeWidth="2" /></Svg></SheetTab>
      </SheetTabs>
      <Status>
        <StatusText $ml={3} $w={63}>15 marks</StatusText>
        <StatusText $ml={0} $w={933}>1 row by 1 column</StatusText>
        <StatusCell $w={127}><Svg w={11} h={13} sw={1.100}><circle cx="5.500" cy="3.500" r="2.500" /><path d="M1 12c0-6 9-6 9 0z" /></Svg><UserName>SWETHA P</UserName><Caret c="#111" s={8} /></StatusCell>
        <StatusCell $w={27} /><StatusCell $w={27} /><StatusCell $w={47} />
        <StatusCell $w={71}>
          <Svg w={60} h={10} c="none"><g fill="#b8b8b8"><path d="M2 1h1.300v8H2zM8 1v8L3.500 5zM23.500 1v8L19.500 5zM35 1v8l4-4zM50.500 1v8L55 5zM56 1h1.300v8H56z" /></g></Svg>
        </StatusCell>
        <StatusCell $w={68}>
          <Svg w={60} h={12} c="none"><path d="M2 1h11v10H2z" fill="#b8b8b8" /><path d="M5.300 1v10M9.200 1v10M2 4h11M2 7.600h11" stroke="#ebebeb" strokeWidth=".9" /><path d="M23 1h11v6H23zM23 8h3v3h-3zM27 8h3v3h-3zM31 8h3v3h-3z" fill="#b8b8b8" /><path d="M44 1h11v10H44z" fill="#666" /></Svg>
        </StatusCell>
      </Status>
    </Window>
  );
}
